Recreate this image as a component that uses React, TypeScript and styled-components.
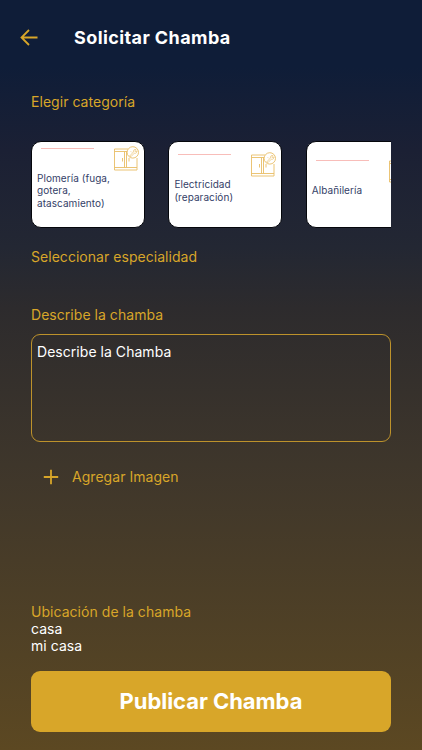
import React from 'react';
import styled, { createGlobalStyle } from 'styled-components';

const gold = '#d8a629';

const GlobalStyle = createGlobalStyle`
  * { box-sizing: border-box; }
  body { margin: 0; background: #0f1d38; }
  button, textarea { font: inherit; border: 0; }
`;

const Screen = styled.main`
  display: flex;
  flex-direction: column;
  width: 100%;
  height: 750px;
  overflow: hidden;
  padding: 0 31px 18.5px;
  font-family: Inter, 'Liberation Sans', sans-serif;
  font-size: 14px;
  line-height: 17px;
  letter-spacing: 0.04px;
  color: #fff;
  background: linear-gradient(180deg, #0f1d38 0%, #0f1d38 9%, #1b2034 20%, #232733 33%, #2d2b2d 41%, #3e362b 62%, #5c4822 100%);
`;

const Header = styled.header`
  display: flex;
  align-items: center;
  gap: 35px;
  height: 75px;
  margin-left: -12px;
`;

const BackButton = styled.button`
  display: flex;
  padding: 0;
  background: none;
  color: ${gold};
`;

const Title = styled.h1`
  margin: 0;
  font-size: 18px;
  line-height: 22px;
  font-weight: 700;
  letter-spacing: 0.41px;
`;

const Label = styled.h2<{ $top?: number }>`
  margin: ${({ $top = 0 }) => $top}px 0 0;
  font: inherit;
  color: ${gold};
`;

const Carousel = styled.div`
  display: flex;
  gap: 23.4px;
  margin-top: 31px;
  overflow: hidden;
`;

const Card = styled.article`
  flex: 0 0 114px;
  display: flex;
  flex-direction: column;
  justify-content: center;
  height: 87px;
  padding: 0 5px 14px 5px;
  border: 1px solid #05070c;
  border-radius: 10px;
  background: #fff;
`;

const CardTop = styled.div`
  display: flex;
  justify-content: space-between;
  height: 26px;
`;

const Rule = styled.span`
  width: 53px;
  height: 1px;
  margin: 2px 0 0 4px;
  background: #f8bdb9;
`;

const CardText = styled.p`
  width: 82px;
  margin: 0;
  font-size: 10px;
  line-height: 12.3px;
  letter-spacing: 0.06px;
  color: #343e67;
`;

const Description = styled.textarea`
  display: block;
  width: 100%;
  height: 108px;
  margin-top: 11px;
  padding: 8px 5px;
  border: 1px solid #bd922b;
  border-radius: 9px;
  outline: 0;
  resize: none;
  background: transparent;
  color: #fff;
  letter-spacing: inherit;
  &::placeholder { color: #fff; opacity: 1; }
`;

const AddImage = styled.button`
  display: flex;
  align-items: center;
  align-self: flex-start;
  gap: 13px;
  margin: 26px 0 0 12px;
  padding: 0;
  background: none;
  color: ${gold};
  letter-spacing: inherit;
`;

const Location = styled.section`
  margin-top: auto;
`;

const Address = styled.p`
  margin: 0;
`;

const Publish = styled.button`
  flex: none;
  height: 61px;
  margin-top: 17px;
  border-radius: 9px;
  background: ${gold};
  color: #fff;
  font-size: 22px;
  font-weight: 700;
  letter-spacing: -0.05px;
`;

const ArrowIcon = () => (
  <svg width="20" height="18" viewBox="0 0 20 18" fill="none" stroke="currentColor" strokeWidth="1.8">
    <path d="M18.500 8.500H3M10 1 2.500 8.500l7.500 7.500" />
  </svg>
);

const PlusIcon = () => (
  <svg width="16" height="16" viewBox="0 0 16 16" fill="none" stroke="currentColor" strokeWidth="1.8">
    <path d="M8 .8v14.400M.8 8h14.400" />
  </svg>
);

const CabinetIcon = () => (
  <svg width="26" height="26" viewBox="0 0 26 26" fill="none" stroke="#e9bd65" strokeWidth=".9">
    <path d="M1.500 3H15M1.500 5.500H14M1.500 3v21h22.500V12M1.500 21.500H24M11.500 5.500v16M13.500 5.500v16M9.500 12v3.500M16 12v3.500" />
    <circle cx="19.800" cy="6.400" r="5.700" fill="#fff" />
    <path d="m16.700 10 3.700-4c-.3-1.800 1-3 2.600-2.400L21.700 5l1 1 1.200-1.300c.4 1.800-1 3-2.500 2.400l-3.500 3.600ZM17.700 5.300l1 1" strokeWidth=".65" />
  </svg>
);

const categories = ['Plomería (fuga, gotera, atascamiento)', 'Electricidad (reparación)', 'Albañilería'];

export default function App() {
  return (
    <>
      <GlobalStyle />
      <Screen>
        <Header>
          <BackButton aria-label="Volver"><ArrowIcon /></BackButton>
          <Title>Solicitar Chamba</Title>
        </Header>
        <Label $top={18}>Elegir categoría</Label>
        <Carousel>
          {categories.map((name) => (
            <Card key={name}>
              <CardTop><Rule /><CabinetIcon /></CardTop>
              <CardText>{name}</CardText>
            </Card>
          ))}
        </Carousel>
        <Label $top={20}>Seleccionar especialidad</Label>
        <Label $top={41}>Describe la chamba</Label>
        <Description placeholder="Describe la Chamba" />
        <AddImage><PlusIcon /><span>Agregar Imagen</span></AddImage>
        <Location>
          <Label>Ubicación de la chamba</Label>
          <Address>casa</Address>
          <Address>mi casa</Address>
        </Location>
        <Publish>Publicar Chamba</Publish>
      </Screen>
    </>
  );
}
